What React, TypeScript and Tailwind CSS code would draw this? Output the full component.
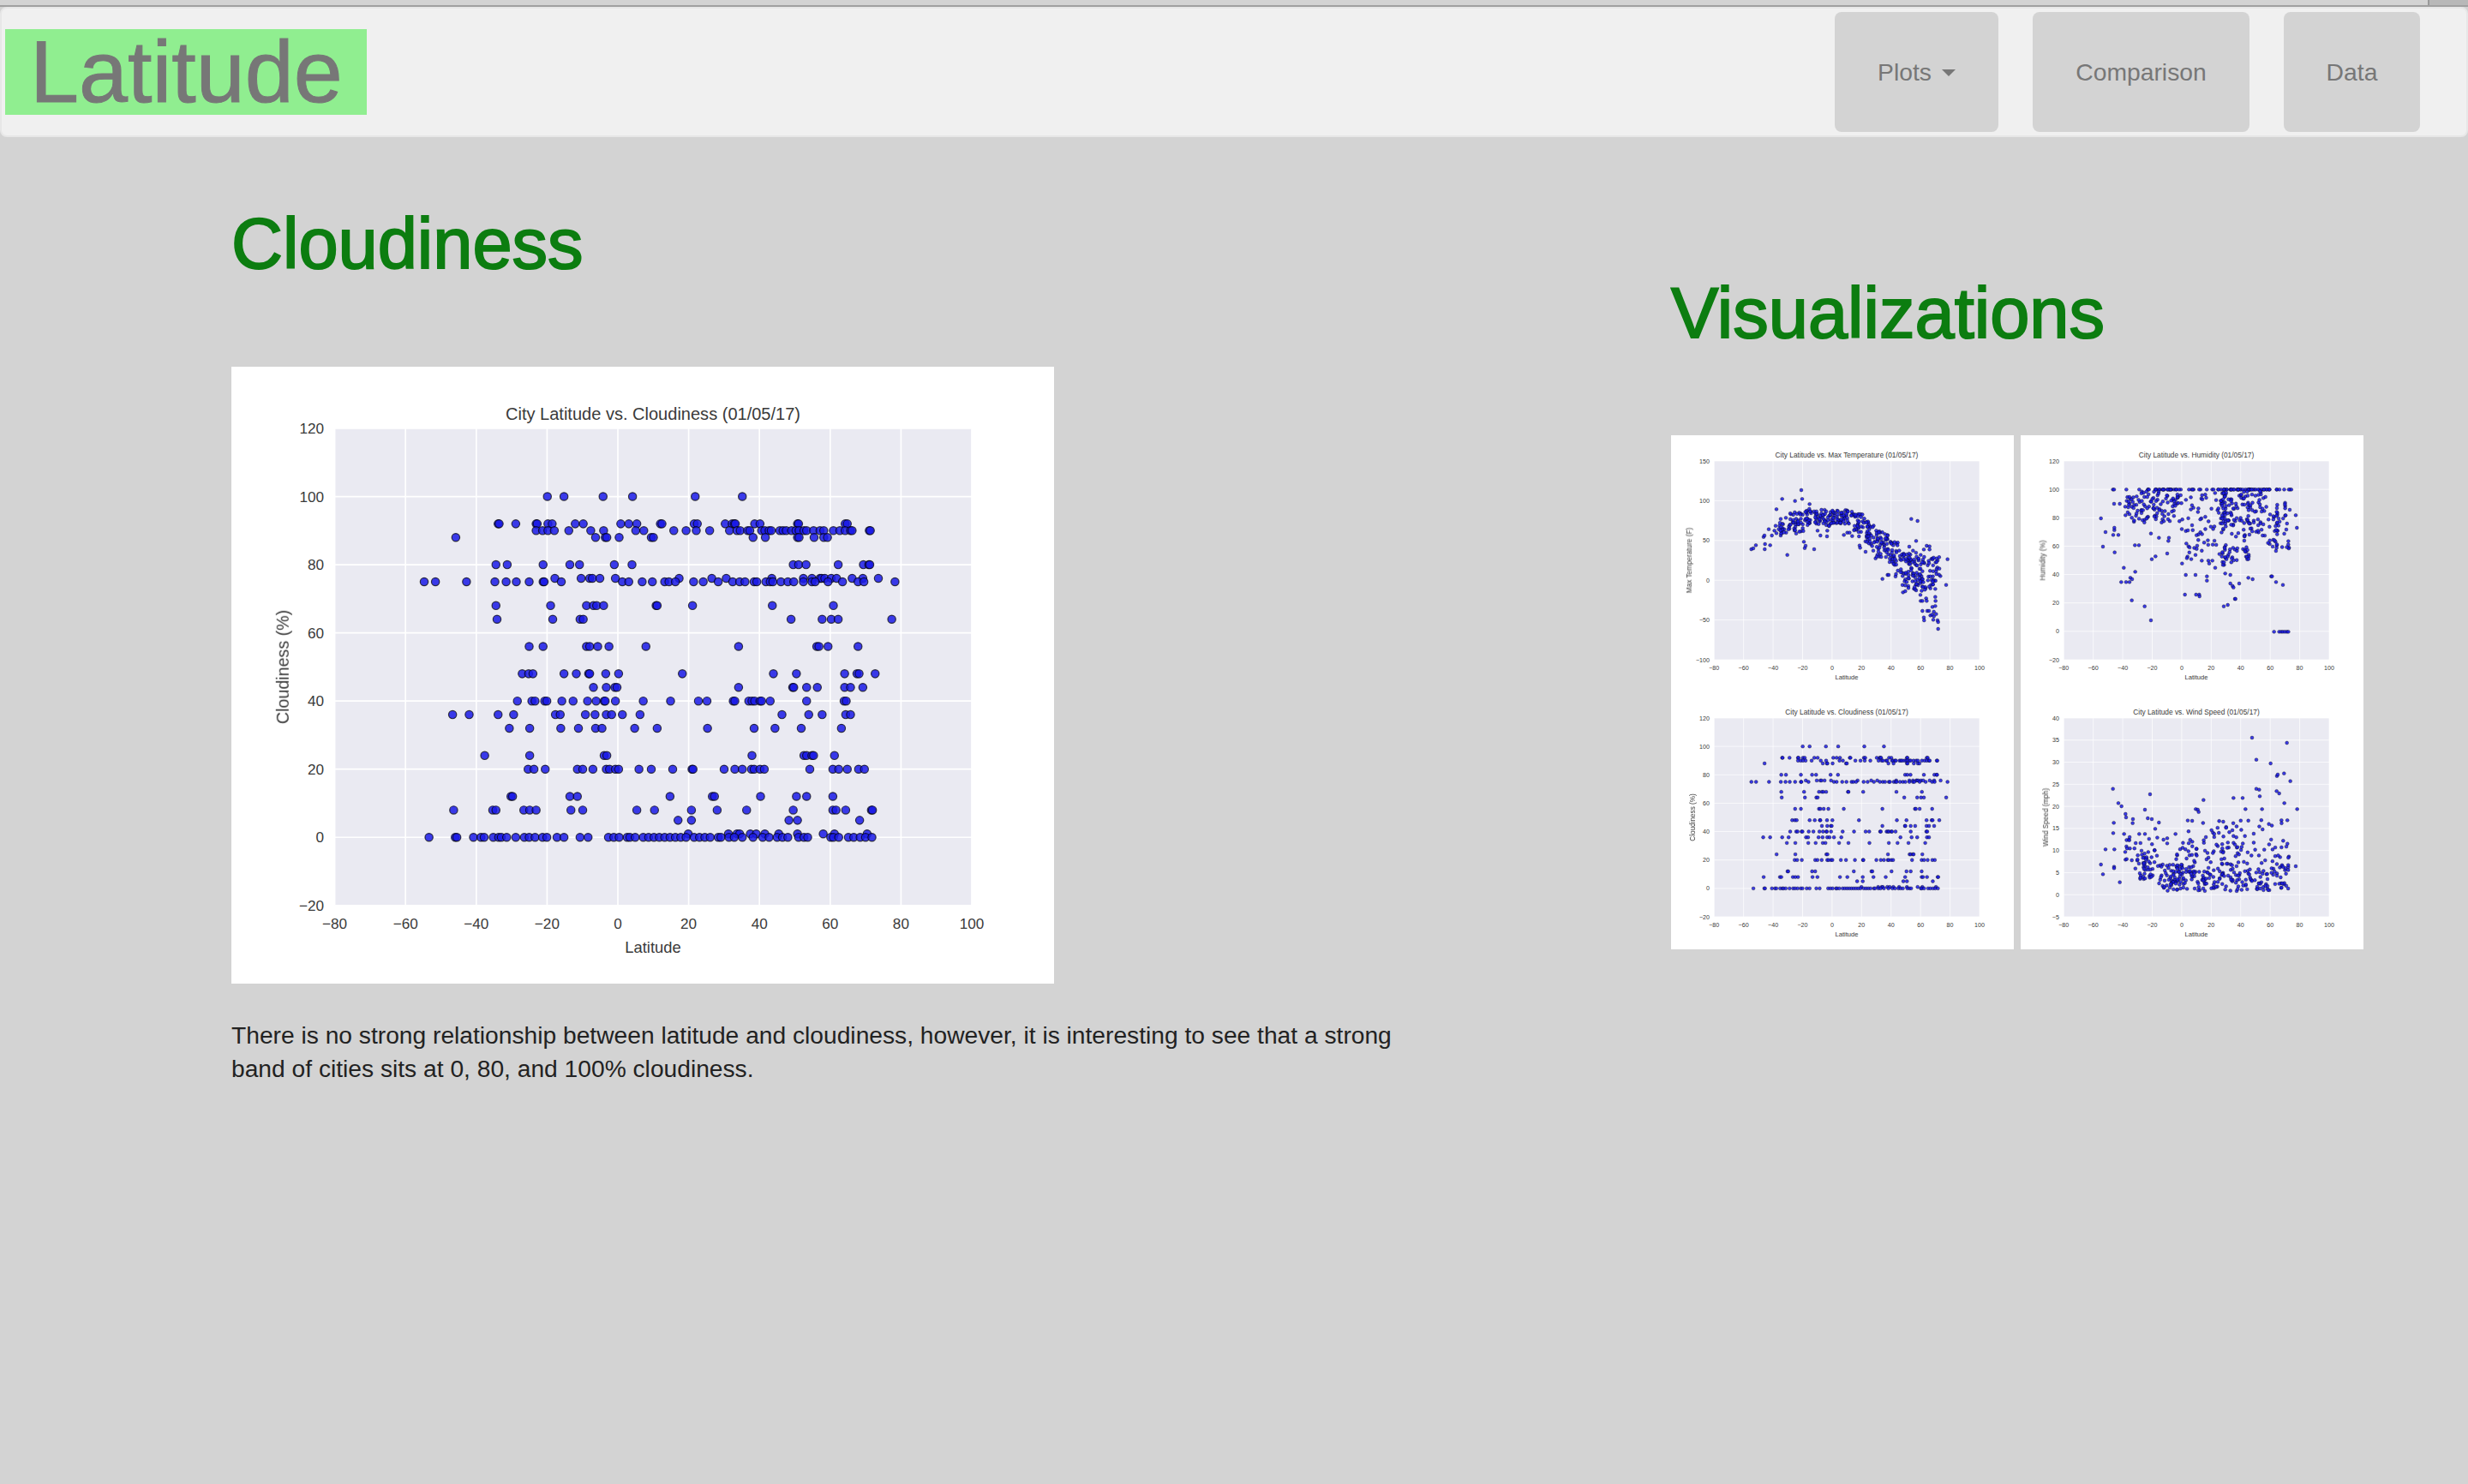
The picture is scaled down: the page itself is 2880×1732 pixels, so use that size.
type Pt = [number, number];

// plot box of the saved matplotlib figure, in figure units (800x600)
const LEFT = 100.5;
const RIGHT = 720;
const TOP = 60;
const BOTTOM = 524;

const cloudRows: [number, number[]][] = [
  [100, [606, 637, 710, 765, 882, 970]],
  [92, [514, 516, 547, 585, 587, 607, 615, 658, 673, 743, 758, 773, 817, 820, 880, 886, 938, 951, 955, 957, 993, 1003, 1073, 1075, 1162, 1166]],
  [90, [585, 597, 607, 619, 646, 687, 711, 771, 786, 842, 865, 884, 909, 946, 960, 966, 980, 984, 1006, 1012, 1020, 1024, 1040, 1046, 1052, 1062, 1070, 1076, 1085, 1090, 1103, 1115, 1122, 1140, 1152, 1162, 1172, 1175, 1207, 1209]],
  [88, [435, 696, 714, 717, 740, 800, 804, 990, 1013, 1073, 1076, 1104, 1122, 1129]],
  [80, [510, 531, 598, 648, 666, 731, 764, 1065, 1075, 1089, 1149, 1196, 1206, 1208]],
  [76, [620, 669, 685, 690, 704, 733, 852, 913, 940, 1025, 1084, 1100, 1115, 1118, 1124, 1136, 1146, 1175, 1195, 1224]],
  [75, [376, 397, 455, 508, 529, 548, 572, 598, 600, 632, 746, 758, 783, 802, 825, 833, 845, 879, 897, 925, 952, 965, 975, 992, 997, 1014, 1022, 1027, 1042, 1055, 1066, 1084, 1100, 1106, 1130, 1157, 1186, 1197, 1255]],
  [68, [510, 612, 679, 692, 698, 711, 809, 811, 877, 1026, 1140]],
  [64, [512, 616, 667, 673, 1061, 1119, 1136, 1149, 1249]],
  [56, [572, 598, 679, 685, 700, 721, 790, 963, 1109, 1113, 1130, 1186]],
  [48, [559, 571, 579, 637, 660, 683, 685, 715, 739, 858, 1028, 1071, 1161, 1184, 1188, 1218]],
  [44, [692, 716, 732, 736, 963, 1064, 1066, 1090, 1110, 1161, 1172, 1195]],
  [40, [550, 577, 583, 601, 605, 633, 654, 681, 697, 712, 714, 733, 785, 836, 888, 904, 953, 956, 982, 988, 993, 1003, 1006, 1022, 1090, 1160, 1164]],
  [36, [429, 460, 514, 543, 621, 630, 677, 695, 716, 726, 746, 779, 1044, 1094, 1119, 1163, 1172]],
  [32, [535, 573, 631, 664, 696, 708, 769, 811, 905, 992, 1031, 1080, 1155]],
  [24, [489, 573, 712, 717, 988, 1085, 1090, 1100, 1103, 1142]],
  [20, [570, 581, 602, 662, 672, 691, 716, 722, 733, 739, 777, 800, 840, 876, 878, 936, 956, 970, 987, 992, 1003, 1011, 1096, 1139, 1150, 1166, 1187, 1198]],
  [12, [538, 541, 648, 662, 835, 914, 918, 1004, 1071, 1090, 1139]],
  [8, [431, 504, 510, 562, 573, 585, 650, 672, 773, 806, 875, 923, 978, 1065, 1139, 1145, 1163, 1211, 1213]],
  [5, [850, 875, 1057, 1073, 1189]],
  [1, [869, 944, 960, 965, 985, 996, 1012, 1038, 1073, 1121, 1142, 1203]],
  [0, [385, 434, 437, 468, 482, 488, 505, 515, 520, 530, 547, 563, 572, 583, 597, 605, 624, 637, 667, 682, 720, 730, 740, 755, 760, 770, 785, 795, 805, 815, 825, 835, 845, 855, 865, 880, 890, 900, 910, 925, 930, 945, 955, 970, 990, 1008, 1020, 1035, 1045, 1055, 1075, 1085, 1092, 1135, 1140, 1150, 1168, 1178, 1190, 1200, 1212]],
];

const cloudPoints: Pt[] = cloudRows.flatMap(([value, xs]) =>
  xs.map((x): Pt => [(x / 1.6 - 10) / 1.2, BOTTOM - ((value + 20) / 140) * (BOTTOM - TOP)])
);

function seeded(seed: number) {
  let s = seed;
  return () => {
    s = (s + 0x6d2b79f5) | 0;
    let t = Math.imul(s ^ (s >>> 15), 1 | s);
    t = (t + Math.imul(t ^ (t >>> 7), 61 | t)) ^ t;
    return ((t ^ (t >>> 14)) >>> 0) / 4294967296;
  };
}

// x0, x1, y0, y1, count - dense clouds of dots that can't be told apart in the picture
function scatter(seed: number, regions: [number, number, number, number, number][]): Pt[] {
  const rnd = seeded(seed);
  const out: Pt[] = [];
  for (const [x0, x1, y0, y1, n] of regions) {
    for (let i = 0; i < n; i++) out.push([x0 + rnd() * (x1 - x0), y0 + rnd() * (y1 - y0)]);
  }
  return out;
}

function scaled(points: Pt[]): Pt[] {
  return points.map(([x, y]): Pt => [(x * 2) / 3, (y * 2) / 3 + 4]);
}

const tempSparse: Pt[] = [
  [281, 393], [288, 390], [297, 379], [324, 350], [327, 345], [329, 375], [328, 393], [342, 323], [347, 379], [353, 345], [362, 328], [366, 311], [369, 253], [369, 337], [384, 287], [384, 345], [389, 217], [407, 413], [402, 283], [403, 335], [434, 224], [438, 338], [456, 186], [459, 217], [465, 367], [468, 389], [471, 381], [484, 252], [485, 235], [501, 393], [513, 328], [523, 345], [547, 328], [546, 348], [605, 343], [617, 335], [625, 335], [634, 347], [658, 348], [660, 380], [662, 388], [681, 402], [700, 375], [704, 382], [708, 398], [716, 425], [740, 497], [758, 483], [762, 483], [812, 544], [841, 287], [863, 294], [858, 364], [834, 384], [847, 398], [874, 413], [885, 394], [895, 381], [905, 383], [905, 394], [963, 518], [968, 428], [943, 487], [938, 482], [873, 553], [874, 574], [880, 574], [893, 565], [895, 574], [880, 609], [897, 609], [903, 609], [908, 625], [914, 622], [885, 632], [886, 642], [920, 628], [918, 640], [925, 560], [926, 574], [915, 595], [925, 592], [920, 612], [928, 620], [933, 642], [935, 648], [935, 672], [908, 530], [910, 518], [925, 532],
];

const tempPoints = scaled([
  ...tempSparse,
  ...scatter(11, [
    [375, 400, 298, 345, 16],
    [410, 470, 262, 332, 40],
    [470, 560, 255, 312, 60],
    [560, 640, 255, 305, 55],
    [640, 680, 270, 335, 30],
    [680, 720, 295, 375, 32],
    [720, 760, 330, 425, 42],
    [760, 800, 360, 450, 30],
    [800, 870, 405, 445, 32],
    [780, 870, 440, 490, 18],
    [810, 880, 475, 540, 38],
    [870, 940, 420, 505, 38],
    [870, 920, 500, 535, 12],
  ]),
]);

const humSparse: Pt[] = [
  [281, 285], [288, 384], [297, 333], [324, 343], [327, 234], [328, 326], [328, 318], [329, 404], [342, 343], [347, 234], [352, 508], [361, 458], [366, 244], [367, 274], [369, 508], [381, 508], [384, 493], [389, 572], [390, 498], [401, 472], [400, 379], [414, 379], [434, 593], [456, 642], [459, 428], [456, 338], [472, 418], [484, 353], [513, 408], [519, 353], [517, 364], [565, 443], [578, 483], [575, 552], [612, 483], [614, 552], [625, 552], [626, 558], [634, 433], [652, 503], [652, 488], [657, 433], [660, 443], [671, 433], [681, 458], [711, 593], [725, 588], [716, 478], [734, 483], [734, 513], [742, 522], [745, 527], [750, 567], [752, 567], [765, 513], [797, 493], [812, 498], [877, 488], [880, 488], [894, 508], [918, 518], [967, 318], [963, 274], [942, 255], [712, 448], [708, 448], [716, 423], [580, 373], [612, 413],
  [887, 682], [905, 682], [912, 682], [918, 682], [925, 682], [932, 682], [937, 682],
  [323, 184], [327, 184], [370, 184], [415, 184],
];

const humPoints = scaled([
  ...humSparse,
  ...scatter(23, [
    [440, 950, 184, 184, 85],
    [370, 560, 190, 300, 105],
    [560, 720, 195, 330, 50],
    [700, 860, 190, 300, 90],
    [700, 800, 300, 440, 50],
    [860, 940, 230, 400, 50],
    [580, 720, 330, 430, 25],
    [800, 860, 300, 350, 15],
  ]),
]);

const windSparse: Pt[] = [
  [810, 153], [932, 171], [825, 230], [875, 243], [922, 278], [897, 287], [900, 282], [944, 305], [323, 332], [453, 351], [825, 332], [835, 335], [837, 358], [896, 340], [905, 348], [745, 364], [777, 364], [640, 371], [342, 382], [353, 393], [923, 382], [968, 403], [787, 403], [845, 403], [613, 403], [620, 405], [623, 413], [435, 405], [367, 420], [369, 432], [326, 451], [324, 487], [393, 438], [445, 435], [459, 438], [471, 472], [484, 450], [500, 510], [362, 490], [392, 452], [379, 510], [415, 490], [435, 490], [513, 505], [513, 523], [542, 490], [281, 597], [288, 631], [347, 659], [327, 605], [327, 610], [297, 544], [328, 544], [366, 553], [367, 580], [963, 603],
];

const windPoints = scaled([
  ...windSparse,
  ...scatter(37, [
    [560, 940, 595, 690, 175],
    [480, 560, 595, 690, 60],
    [400, 470, 570, 650, 30],
    [370, 480, 500, 600, 30],
    [580, 940, 440, 595, 105],
    [540, 600, 520, 580, 10],
  ]),
]);

type ChartProps = {
  title: string;
  yLabel: string;
  yMin: number;
  yMax: number;
  yStep: number;
  labelX: number;
  points: Pt[];
  className: string;
};

function Chart({ title, yLabel, yMin, yMax, yStep, labelX, points, className }: ChartProps) {
  const xTicks = [-80, -60, -40, -20, 0, 20, 40, 60, 80, 100];
  const yTicks: number[] = [];
  for (let v = yMin; v <= yMax; v += yStep) yTicks.push(v);
  const toX = (v: number) => LEFT + ((v + 80) / 180) * (RIGHT - LEFT);
  const toY = (v: number) => BOTTOM - ((v - yMin) / (yMax - yMin)) * (BOTTOM - TOP);
  const tick = (v: number) => String(v).replace("-", "\u2212");

  return (
    <svg viewBox="0 0 800 600" className={className}>
      <rect width="800" height="600" fill="#ffffff" />
      <rect x={LEFT} y={TOP} width={RIGHT - LEFT} height={BOTTOM - TOP} fill="#eaeaf2" />
      {xTicks.map((v) => (
        <line key={v} x1={toX(v)} x2={toX(v)} y1={TOP} y2={BOTTOM} stroke="#ffffff" strokeWidth="1.4" />
      ))}
      {yTicks.map((v) => (
        <line key={v} x1={LEFT} x2={RIGHT} y1={toY(v)} y2={toY(v)} stroke="#ffffff" strokeWidth="1.4" />
      ))}
      {points.map(([x, y], i) => (
        <circle key={i} cx={x} cy={y} r="3.9" fill="#1a1ae6" fillOpacity="0.85" stroke="#000000" strokeOpacity="0.7" strokeWidth="1" />
      ))}
      <g fill="#3a3a3a" fontSize="14.3">
        <text x="410" y="52" textAnchor="middle" fontSize="16.7">
          {title}
        </text>
        {xTicks.map((v) => (
          <text key={v} x={toX(v)} y="547" textAnchor="middle">
            {tick(v)}
          </text>
        ))}
        {yTicks.map((v) => (
          <text key={v} x="90" y={toY(v) + 5} textAnchor="end">
            {tick(v)}
          </text>
        ))}
        <text x="410" y="570" textAnchor="middle" fontSize="15.3">
          Latitude
        </text>
        <text transform={`translate(${labelX} 292) rotate(-90)`} y="5" textAnchor="middle" fontSize="16.4">
          {yLabel}
        </text>
      </g>
    </svg>
  );
}

const headingClass =
  "text-[83px] leading-[92px] text-[#0c7d10] [-webkit-text-stroke:2px_#0c7d10]";
const navItemClass =
  "flex h-[140px] items-center justify-center rounded-lg bg-[#d3d3d3] text-[28.3px] text-[#777777]";

export default function App() {
  return (
    <div className="relative min-h-[1732px] bg-[#d3d3d3] font-['Liberation_Sans',Arial,sans-serif]">
      <div className="absolute right-0 top-0 h-[6px] w-[47px] border-l-2 border-[#999999] bg-[#b8b8b8]" />
      <div className="h-[6px]" />
      <div className="h-[2px] bg-[#a0a0a0]" />

      <nav className="flex h-[152px] items-center justify-between rounded-lg border-2 border-[#e7e7e7] bg-[#f0f0f0] pl-1 pr-[54px]">
        <a className="flex h-[100px] w-[422px] items-center bg-[#90ee90] pl-[29px] text-[102.5px] leading-[100px] text-[#777777] [-webkit-text-stroke:1px_#777777]">
          Latitude
        </a>
        <ul className="flex gap-10">
          <li className={`${navItemClass} w-[191px] gap-[12px]`}>
            Plots
            <span className="mt-[2px] h-0 w-0 border-x-8 border-t-8 border-x-transparent border-t-[#777777]" />
          </li>
          <li className={`${navItemClass} w-[253px]`}>Comparison</li>
          <li className={`${navItemClass} w-[159px]`}>Data</li>
        </ul>
      </nav>

      <main className="flex">
        <section className="w-[1950px] pl-[270px] pt-[79px]">
          <h1 className={headingClass}>Cloudiness</h1>
          <Chart
            title="City Latitude vs. Cloudiness (01/05/17)"
            yLabel="Cloudiness (%)"
            yMin={-20}
            yMax={120}
            yStep={20}
            labelX={51}
            points={cloudPoints}
            className="mt-[97px] h-[720px] w-[960px] blur-[0.7px]"
          />
          <p className="mt-[41px] w-[1400px] text-[28.2px] leading-[39px] text-[#222222]">
            There is no strong relationship between latitude and cloudiness, however, it is interesting to see that a strong band of cities sits at 0, 80, and 100% cloudiness.
          </p>
        </section>

        <section className="pt-[160px]">
          <h1 className={headingClass}>Visualizations</h1>
          <div className="mt-[96px] grid w-[808px] grid-cols-2 gap-x-2">
            <Chart title="City Latitude vs. Max Temperature (01/05/17)" yLabel="Max Temperature (F)" yMin={-100} yMax={150} yStep={50} labelX={43} points={tempPoints} className="h-[300px] w-[400px] blur-[0.5px]" />
            <Chart title="City Latitude vs. Humidity (01/05/17)" yLabel="Humidity (%)" yMin={-20} yMax={120} yStep={20} labelX={52} points={humPoints} className="h-[300px] w-[400px] blur-[0.5px]" />
            <Chart title="City Latitude vs. Cloudiness (01/05/17)" yLabel="Cloudiness (%)" yMin={-20} yMax={120} yStep={20} labelX={51} points={cloudPoints} className="h-[300px] w-[400px] blur-[0.5px]" />
            <Chart title="City Latitude vs. Wind Speed (01/05/17)" yLabel="Wind Speed (mph)" yMin={-5} yMax={40} yStep={5} labelX={59} points={windPoints} className="h-[300px] w-[400px] blur-[0.5px]" />
          </div>
        </section>
      </main>
    </div>
  );
}
